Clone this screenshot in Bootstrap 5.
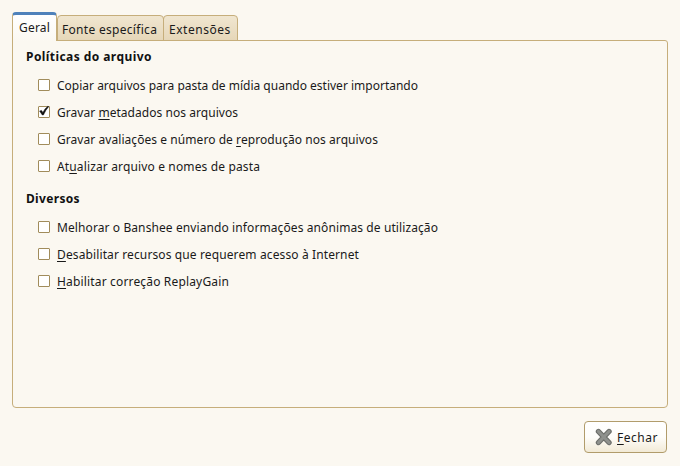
<!DOCTYPE html>
<html lang="pt-BR">
<head>
<meta charset="utf-8">
<meta name="viewport" content="width=device-width, initial-scale=1">
<title>Preferências</title>
<link href="https://cdn.jsdelivr.net/npm/bootstrap@5.3.0/dist/css/bootstrap.min.css" rel="stylesheet">
<style>
body{font-family:"Noto Sans","Liberation Sans",sans-serif;font-size:12px;line-height:15px;color:#1a1a1a;background:#fbf8f1;height:466px;padding:12px 12px 13px;overflow:hidden}
.prefs-tabs{--bs-nav-tabs-border-width:0;height:29px;margin-bottom:-1px;position:relative;z-index:1;border:0}
.prefs-tabs .nav-link{height:26px;padding:6px 5px 0;margin:0;color:#1a1a1a;border:1px solid #c6ae7b;border-radius:4px 4px 0 0;background:linear-gradient(#f0e6d0,#e6d7b9);line-height:15px;white-space:nowrap;font-size:12px;letter-spacing:.19px}
.prefs-tabs .nav-link.active{height:29px;width:45px;padding:5px 0 0 6px;color:#1a1a1a;border:1px solid #c6ae7b;border-top:3px solid #4f82bb;border-bottom:0;background:linear-gradient(#fff,#fbf8f1)}
.prefs-tabs .nav-link.tab-source{width:107px;padding-left:4px;letter-spacing:.3px}
.prefs-tabs .nav-link.tab-ext{width:75px;margin-left:-1px;letter-spacing:.53px}
.prefs-panel{height:368px;width:656px;border:1px solid #c6ae7b;border-radius:0 3px 4px 4px;padding:7px 13px}
.prefs-panel h2{font-size:12px;line-height:17px;font-weight:700;letter-spacing:.43px;margin:0 0 6px;color:#111}
.prefs-panel h2.misc{letter-spacing:.33px;margin-top:7px;padding-top:4px}
.prefs-panel .form-check{min-height:27px;height:27px;margin:0 0 0 12px;padding:0}
.prefs-panel .form-check-input{width:12px;height:12px;margin:0;float:none;border:1px solid #a18c5b;border-radius:1px;background-color:#fff;box-shadow:none;flex:none}
.prefs-panel .form-check-label{margin-left:7px;white-space:nowrap;padding-top:2px}
.prefs-panel .form-check-input:checked[type=checkbox]{background-color:#fff;background-image:none;border-color:#a18c5b}
.tick{position:absolute;left:0;top:7px;width:12px;height:12px;pointer-events:none}
.s1{letter-spacing:.001px}.s2{letter-spacing:.043px}.s3{letter-spacing:.06px}.s4{letter-spacing:.141px}.s5{letter-spacing:.097px}.s6{letter-spacing:.119px}.s7{letter-spacing:.162px}
.key{text-decoration:underline;text-underline-offset:2px;text-decoration-thickness:1px;text-decoration-skip-ink:none}
.close-btn{width:83px;height:32px;margin:13px 1px 0 0;padding:0 0 0 10px;border:1px solid #b19c6b;border-radius:4px;background:linear-gradient(#fff,#fefdfa 50%,#f2ead6);color:#1a1a1a;font-size:12px;letter-spacing:.5px;line-height:15px}
.close-btn svg{width:18px;height:18px;margin-right:4px}
</style>
</head>
<body>
<ul class="nav nav-tabs prefs-tabs align-items-end flex-nowrap">
  <li class="nav-item"><a class="nav-link active" href="#geral">Geral</a></li>
  <li class="nav-item"><a class="nav-link tab-source" href="#fonte">Fonte específica</a></li>
  <li class="nav-item"><a class="nav-link tab-ext" href="#ext">Extensões</a></li>
</ul>
<main class="prefs-panel" id="geral">
  <h2>Políticas do arquivo</h2>
  <div class="form-check d-flex align-items-center"><input class="form-check-input" type="checkbox" id="c1"><label class="form-check-label s1" for="c1">Copiar arquivos para pasta de mídia quando estiver importando</label></div>
  <div class="form-check d-flex align-items-center position-relative"><input class="form-check-input" type="checkbox" id="c2" checked><svg class="tick" viewBox="0 0 12 12"><path d="M1.6 6 3.5 5.4 4.9 7.4Q7 3.2 9.6 1.4L10.8 1.6Q7.6 5 5.4 10H4.3Z" fill="#111" stroke="#111" stroke-width=".5"/></svg><label class="form-check-label s2" for="c2">Gravar <span class="key">m</span>etadados nos arquivos</label></div>
  <div class="form-check d-flex align-items-center"><input class="form-check-input" type="checkbox" id="c3"><label class="form-check-label s3" for="c3">Gravar avaliações e número de <span class="key">r</span>eprodução nos arquivos</label></div>
  <div class="form-check d-flex align-items-center"><input class="form-check-input" type="checkbox" id="c4"><label class="form-check-label s4" for="c4">At<span class="key">u</span>alizar arquivo e nomes de pasta</label></div>
  <h2 class="misc">Diversos</h2>
  <div class="form-check d-flex align-items-center"><input class="form-check-input" type="checkbox" id="c5"><label class="form-check-label s5" for="c5">Melhorar o Banshee enviando informações anônimas de utilização</label></div>
  <div class="form-check d-flex align-items-center"><input class="form-check-input" type="checkbox" id="c6"><label class="form-check-label s6" for="c6"><span class="key">D</span>esabilitar recursos que requerem acesso à Internet</label></div>
  <div class="form-check d-flex align-items-center"><input class="form-check-input" type="checkbox" id="c7"><label class="form-check-label s7" for="c7"><span class="key">H</span>abilitar correção ReplayGain</label></div>
</main>
<div class="d-flex justify-content-end">
  <button type="button" class="btn close-btn d-flex align-items-center"><svg viewBox="0 0 18 18" fill="none" stroke-linecap="round"><path d="M3.5 3.5 14 14.5M14 3.5 3.5 14.5" stroke="#6c6e6a" stroke-width="5.4"/><path d="M3.5 3.5 14 14.5M14 3.5 3.5 14.5" stroke="#8f918d" stroke-width="3.2"/></svg><span><span class="key">F</span>echar</span></button>
</div>
<script src="https://cdn.jsdelivr.net/npm/bootstrap@5.3.0/dist/js/bootstrap.bundle.min.js"></script>
</body>
</html>
